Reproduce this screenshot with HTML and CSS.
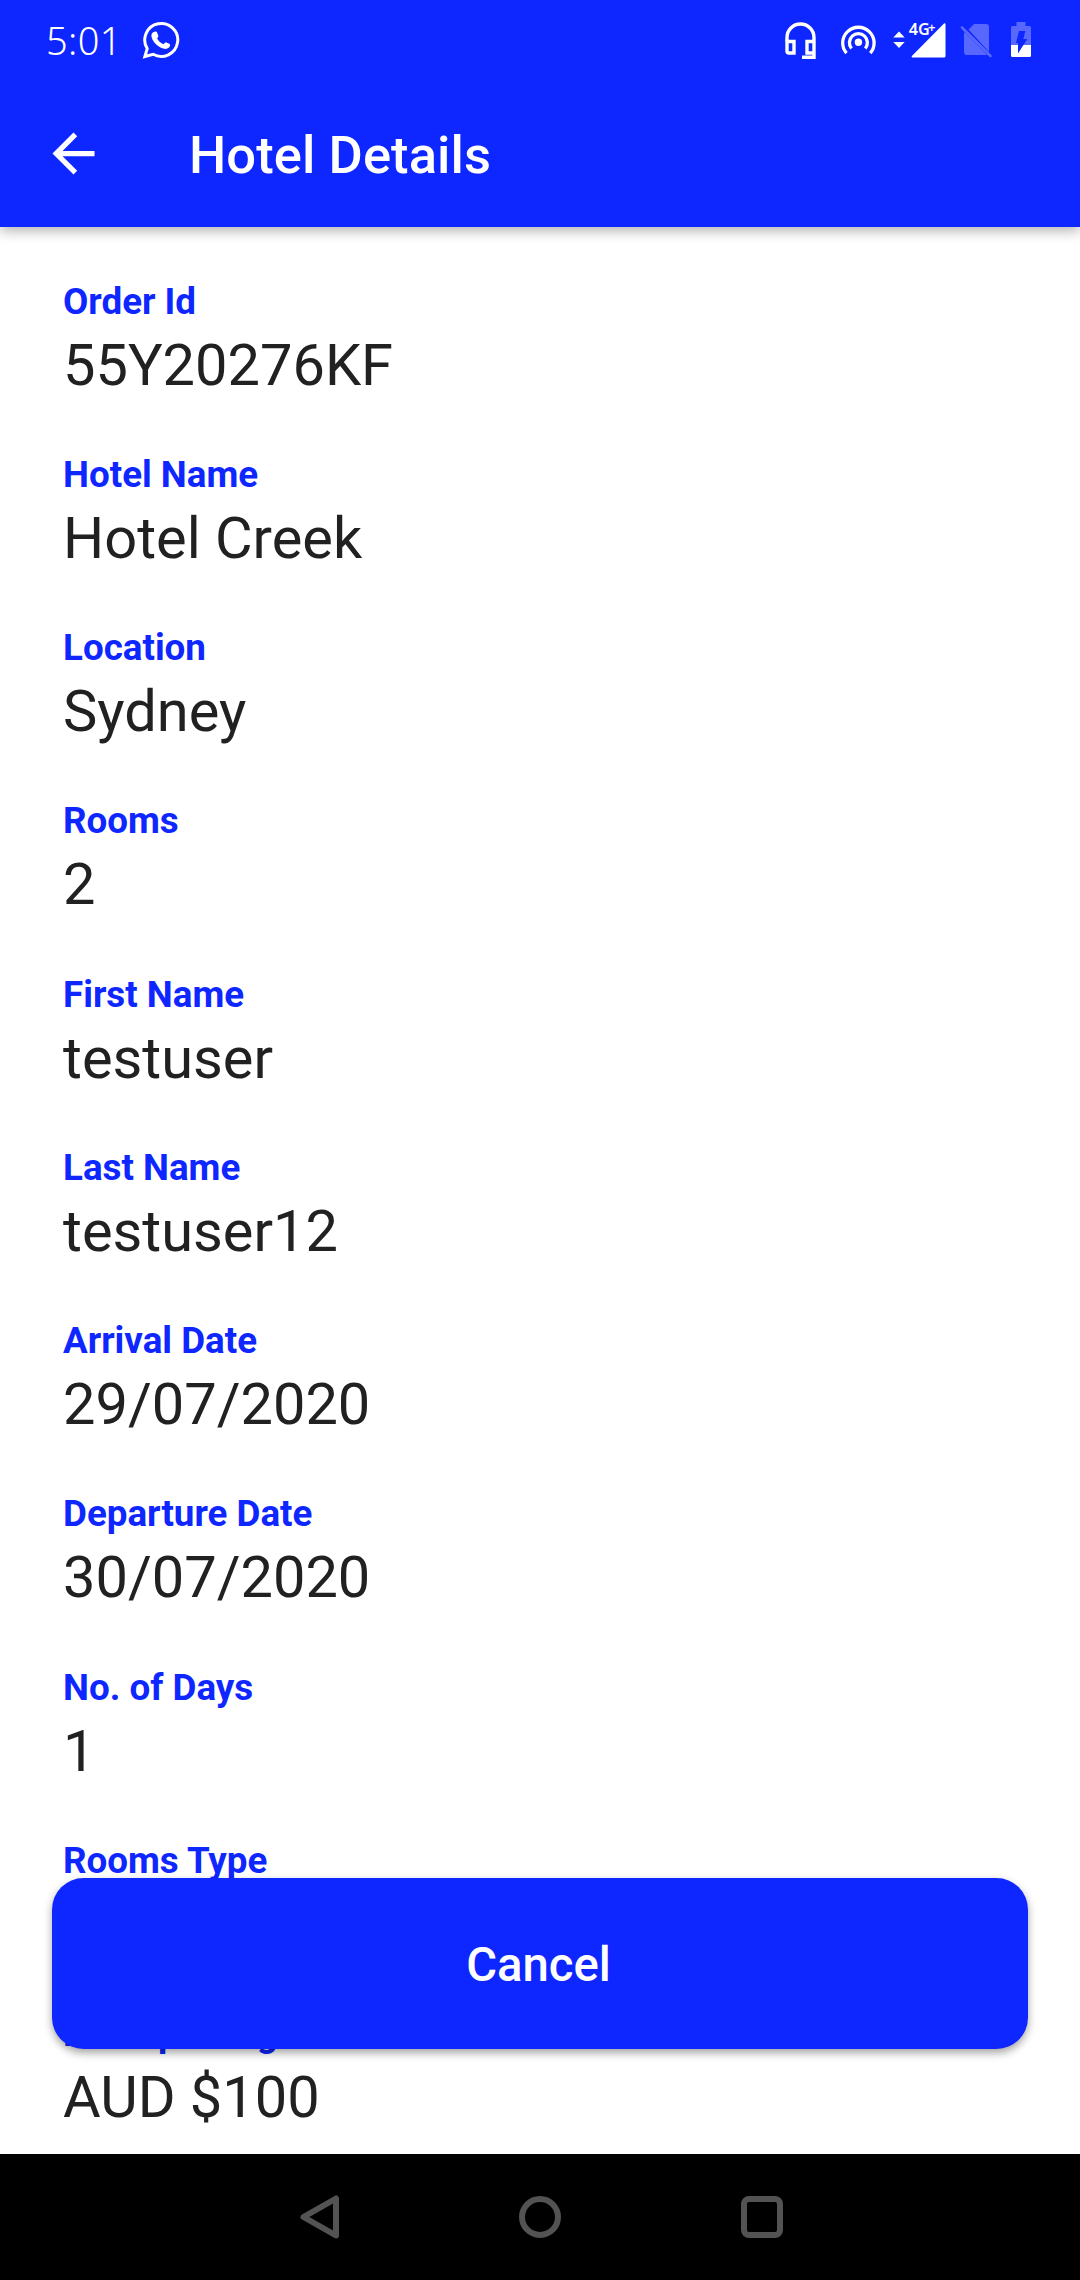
FILE: index.html
```html
<!DOCTYPE html>
<html lang="en">
<head>
<meta charset="utf-8">
<title>Hotel Details</title>
<link rel="stylesheet" href="styles.css">
</head>
<body>
<div class="screen">
  <header class="top">
    <div class="status-bar">
      <span class="clock">5:01</span>
      <svg class="whatsapp" width="40" height="80" viewBox="141 0 40 80">
        <path d="M144.900 56.500 L147.200 48.600 A16.500 16.500 0 1 1 153.100 54.300 Z" fill="none" stroke="#fff" stroke-width="3"/>
        <path d="M153.600 32.100c1.500-1 3.200-.6 3.700.9l1 2.700c.3 1-.9 2.300-1.200 2.900 1.400 2.700 3.700 4.600 6.600 5.700.7-.7 1.500-2.200 2.600-1.900l3.400 1.500c1.200 1.500-.4 3.900-2.500 4.700-3 1-7.200-.7-10.400-3.600-3.600-3.300-5.900-7.500-5.300-10.300.3-1.200 1.100-2 2.100-2.600z" fill="#fff"/>
      </svg>
      <div class="indicators">
        <svg width="56" height="80" viewBox="775 0 56 80" fill="none" stroke="#fff" stroke-width="3.400">
          <path d="M787 41V37.500a13.500 13.500 0 0 1 27 0V57.300H802"/>
          <path d="M787 41.500h7v11.500h-5.500a1.500 1.500 0 0 1-1.500-1.500zM814 41.500h-7v11.500h7"/>
        </svg>
        <svg width="57" height="80" viewBox="831 0 57 80" fill="none" stroke="#fff" stroke-width="3.300">
          <path d="M846.500 53.200a15.700 15.700 0 1 1 23.800 0M851.500 48.500a9 9 0 1 1 13.800 0"/>
          <circle cx="858.400" cy="42.200" r="3.700" fill="#fff" stroke="none"/>
        </svg>
        <svg class="signal" width="62" height="80" viewBox="888 0 62 80" fill="#fff">
          <path d="M893.300 37.500l5.700-6 5.700 6zM893.300 42l5.700 6 5.700-6zM945.500 24.500V56a1.500 1.500 0 0 1-1.500 1.500H912.500a.8.800 0 0 1-.6-1.400L944 23.500q1.500-1 1.500 1z"/>
          <text x="908.700" y="34.700" font-size="16.200">4G</text>
          <text x="928" y="31.500" font-size="13">+</text>
        </svg>
        <svg width="50" height="80" viewBox="950 0 50 80">
          <path d="M974 24h12a3 3 0 0 1 3 3v25L968.500 29.500zM965 32.500L987 54.800l-.8.200H967a3 3 0 0 1-3-3V33z" fill="#5868ff"/>
          <path d="M962 27.500L990.500 56" stroke="#5868ff" stroke-width="2.600" stroke-linecap="round"/>
        </svg>
        <svg width="80" height="80" viewBox="1000 0 80 80">
          <path d="M1016.500 22h9v4h4a1.500 1.500 0 0 1 1.500 1.500V45h-20V27.500a1.500 1.500 0 0 1 1.500-1.500h4z" fill="#5868ff"/>
          <path d="M1011 45h20v10.500a1.500 1.500 0 0 1-1.500 1.500h-17a1.500 1.500 0 0 1-1.500-1.500z" fill="#fff"/>
          <path d="M1019 31h6.300l-2 8h4l-9.300 14.500v-10.500h-2z" fill="#0e26ff"/>
        </svg>
      </div>
    </div>
    <div class="app-bar">
      <svg class="back" width="63" height="63" viewBox="0 0 24 24" fill="#fff"><path d="M20 11H7.830l5.590-5.590L12 4l-8 8 8 8 1.410-1.410L7.830 13H20v-2z"/></svg>
      <h1 class="title">Hotel Details</h1>
    </div>
  </header>

  <main class="content">
    <dl class="details">
      <div class="field"><dt>Order Id</dt><dd>55Y20276KF</dd></div>
      <div class="field"><dt>Hotel Name</dt><dd>Hotel Creek</dd></div>
      <div class="field"><dt>Location</dt><dd>Sydney</dd></div>
      <div class="field"><dt>Rooms</dt><dd>2</dd></div>
      <div class="field"><dt>First Name</dt><dd>testuser</dd></div>
      <div class="field"><dt>Last Name</dt><dd>testuser12</dd></div>
      <div class="field"><dt>Arrival Date</dt><dd>29/07/2020</dd></div>
      <div class="field"><dt>Departure Date</dt><dd>30/07/2020</dd></div>
      <div class="field"><dt>No. of Days</dt><dd>1</dd></div>
      <div class="field"><dt>Rooms Type</dt><dd></dd></div>
      <div class="field"><dt>Price per Night</dt><dd>AUD $100</dd></div>
    </dl>
    <button class="cancel" type="button">Cancel</button>
  </main>

  <nav class="nav-bar">
    <svg width="80" height="126" viewBox="280 2154 80 126"><path d="M336 2198.500v37L303.500 2217z"/></svg>
    <svg width="80" height="126" viewBox="500 2154 80 126"><circle cx="540" cy="2217" r="18"/></svg>
    <svg width="80" height="126" viewBox="720 2154 80 126"><rect x="744" y="2199" width="36" height="36" rx="5"/></svg>
  </nav>
</div>
</body>
</html>
```
FILE: styles.css
```css
* { box-sizing: border-box; }

body {
  margin: 0;
  background: #fff;
  font-family: Roboto, "Liberation Sans", sans-serif;
}

.screen {
  display: flex;
  flex-direction: column;
  width: 1080px;
  height: 2280px;
  overflow: hidden;
}

.top {
  z-index: 1;
  flex: none;
  height: 227px;
  background: #0e26ff;
  color: #fff;
  box-shadow: 0 4px 12px rgba(0, 0, 0, 0.3);
}

.status-bar {
  display: flex;
  align-items: center;
  height: 80px;
  padding-left: 46px;
}

.clock {
  width: 95px;
  font: 350 38px/80px "Noto Sans", sans-serif;
  letter-spacing: 0.4px;
}

.indicators {
  display: flex;
  margin-left: auto;
}

.signal text {
  font-family: "Noto Sans", sans-serif;
  font-weight: 600;
}

.app-bar {
  display: flex;
  align-items: center;
  gap: 84px;
  height: 147px;
  padding-left: 42px;
}

.title {
  margin: 0;
  padding-top: 3px;
  font-size: 52.5px;
  font-weight: 500;
  line-height: 62px;
  letter-spacing: 0.08px;
}

.content {
  position: relative;
  flex: 1;
  min-height: 0;
}

.details {
  margin: 0;
  padding: 52.5px 63px 0;
}

.field {
  display: flex;
  flex-direction: column;
  gap: 9px;
  height: 173.25px;
}

.field dt {
  color: #0e26ff;
  font-size: 36.75px;
  font-weight: 700;
  line-height: 43px;
}

.field dd {
  margin: 0;
  color: #212121;
  font-size: 57.75px;
  line-height: 67.5px;
}

.cancel {
  position: absolute;
  right: 52.5px;
  bottom: 105px;
  left: 52.4px;
  height: 170.6px;
  padding: 4px 3px 0 0;
  border: 0;
  border-radius: 31.5px;
  background: #0e26ff;
  box-shadow: 0 4px 9px rgba(0, 0, 0, 0.36);
  color: #fff;
  font: 500 47.25px/55px Roboto, "Liberation Sans", sans-serif;
}

.nav-bar {
  display: flex;
  flex: none;
  justify-content: center;
  gap: 140px;
  height: 126px;
  background: #000;
  fill: none;
  stroke: #535353;
  stroke-width: 6;
  stroke-linejoin: round;
}
```
